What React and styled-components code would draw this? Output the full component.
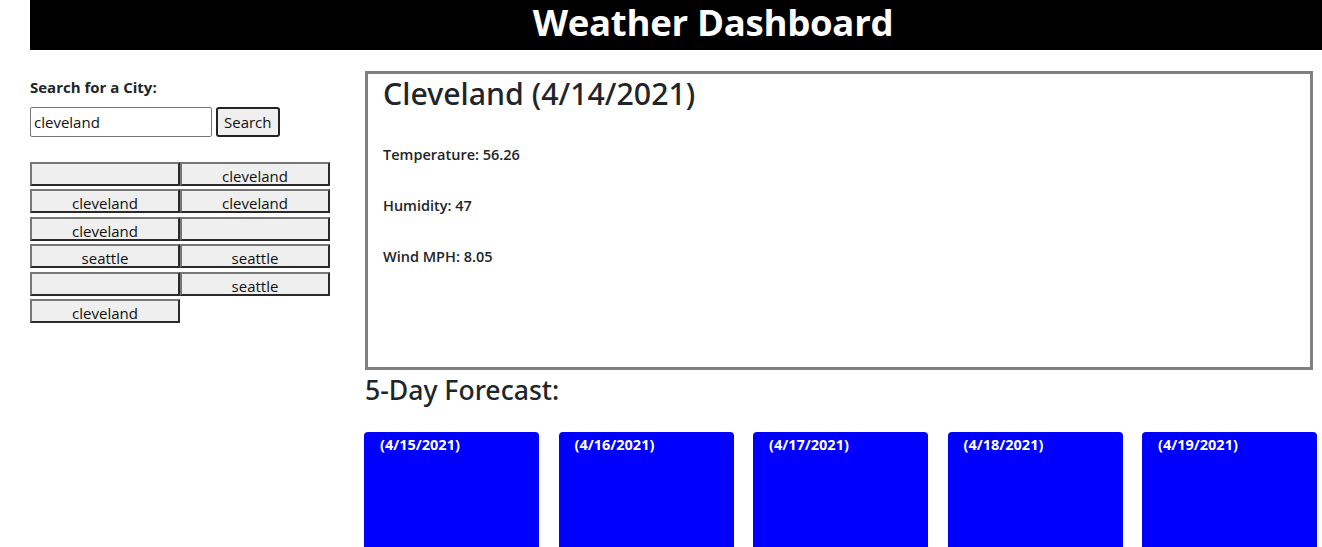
import styled, { createGlobalStyle } from "styled-components"

const Global = createGlobalStyle`
  body {
    margin: 0;
    font-family: "Open Sans", "Noto Sans", sans-serif;
    color: #212529;
  }
  * { box-sizing: border-box; }
`;

const Page = styled.div`
    padding-left: 30px;
`;
const Header = styled.header`
    height: 50px;
    background: #000;
    color: #fff;
    display: flex;
    align-items: center;
    justify-content: center;
    padding: 0 0 6px 74px;
`;
const Title = styled.h1`
    margin: 0;
    font-size: 36.6px;
    font-weight: 700;
    letter-spacing: -0.3px;
    line-height: 40px;
`;
const Row = styled.div`
    display: flex;
    gap: 35px;
    margin-top: 21px;
`;
const Sidebar = styled.aside`
    width: 300px;
    flex-shrink: 0;
`;
const Label = styled.label`
    display: block;
    margin-top: 6px;
    font-size: 15px;
    font-weight: 700;
    line-height: 20px;
`;
const SearchRow = styled.div`
    display: flex;
    gap: 4px;
    margin-top: 10px;
`;
const Input = styled.input`
    width: 182px;
    height: 30px;
    padding: 0 3px;
    border: 1px solid #767676;
    border-radius: 2px;
    font: 15px "Open Sans", sans-serif;
    color: #111;
`;
const Button = styled.button`
    height: 30px;
    padding: 0 6px;
    background: #efefef;
    border: 2px solid #222;
    border-radius: 3px;
    font: 15px "Open Sans", sans-serif;
    color: #111;
`;
const History = styled.div`
    display: grid;
    grid-template-columns: 150px 150px;
    row-gap: 3.4px;
    margin-top: 25px;
`;
const CityButton = styled.button`
    height: 24px;
    padding: 3px 0 0;
    background: #efefef;
    border: 2px solid;
    border-color: #777 #2a2a2a #2a2a2a #777;
    font: 15px/19px "Open Sans", sans-serif;
    color: #111;
`;
const Main = styled.main`
    width: 952px;
    flex-shrink: 0;
`;
const Card = styled.section`
    width: 948px;
    height: 299px;
    border: 3px solid #808080;
    padding: 0 15px;
`;
const City = styled.h2`
    margin: 0 0 31px;
    font-family: "Noto Sans", "Open Sans", sans-serif;
    font-size: 30.3px;
    font-weight: 500;
    line-height: 40px;
`;
const Stat = styled.p`
    margin: 0 0 31px;
    font-size: 14.5px;
    font-weight: 600;
    line-height: 20px;
`;
const Subtitle = styled.h3`
    margin: 2px 0 0;
    font-family: "Noto Sans", "Open Sans", sans-serif;
    font-size: 26.6px;
    font-weight: 500;
    line-height: 36px;
`;
const Forecast = styled.div`
    display: flex;
    gap: 19.5px;
    margin-top: 24px;
    margin-left: -1px;
`;
const Day = styled.div`
    width: 175px;
    height: 130px;
    background: #0000ff;
    border-radius: 4px 4px 0 0;
    color: #fff;
    padding: 3px 16px;
    font-size: 14.5px;
    font-weight: 700;
`;

const history = ["", "cleveland", "cleveland", "cleveland", "cleveland", "", "seattle", "seattle", "", "seattle", "cleveland"]
const days = ["4/15/2021", "4/16/2021", "4/17/2021", "4/18/2021", "4/19/2021"]

const App = () => {
  return (
    <Page>
      <Global />
      <Header>
        <Title>Weather Dashboard</Title>
      </Header>
      <Row>
        <Sidebar>
          <Label>Search for a City:</Label>
          <SearchRow>
            <Input defaultValue="cleveland" />
            <Button>Search</Button>
          </SearchRow>
          <History>
            {history.map((c, i) => <CityButton key={i}>{c}</CityButton>)}
          </History>
        </Sidebar>
        <Main>
          <Card>
            <City>Cleveland (4/14/2021)</City>
            <Stat>Temperature: 56.26</Stat>
            <Stat>Humidity: 47</Stat>
            <Stat>Wind MPH: 8.05</Stat>
          </Card>
          <Subtitle>5-Day Forecast:</Subtitle>
          <Forecast>
            {days.map(d => <Day key={d}>({d})</Day>)}
          </Forecast>
        </Main>
      </Row>
    </Page>
  )
}

export default App
